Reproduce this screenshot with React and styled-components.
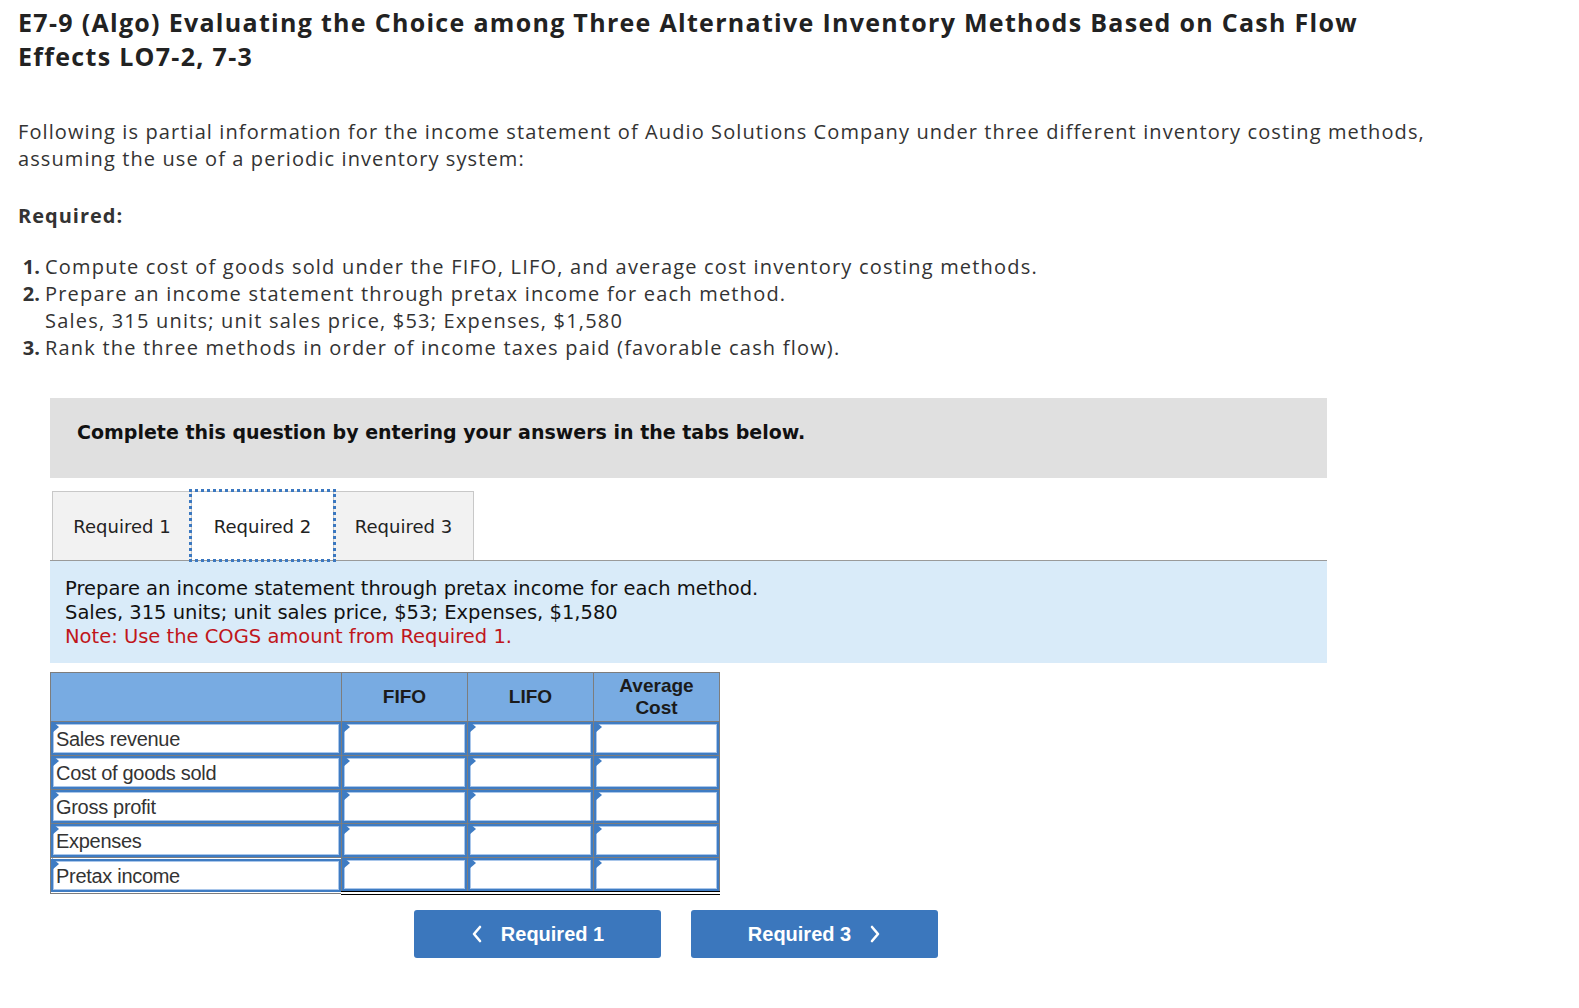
import styled, { createGlobalStyle } from 'styled-components'

const GlobalStyle = createGlobalStyle`
  body {
    margin: 0;
    background: #ffffff;
    font-family: "Open Sans", "Liberation Sans", sans-serif;
    color: #333333;
  }
`

const Page = styled.div`
  padding: 5px 18px 40px 18px;
`

const Title = styled.h1`
  margin: 0;
  font-size: 25px;
  line-height: 34px;
  font-weight: 700;
  letter-spacing: 1.3px;
  color: #222222;
`

const Intro = styled.p`
  margin: 45px 0 0 0;
  font-size: 20px;
  line-height: 27px;
  letter-spacing: 1.1px;
`

const RequiredLabel = styled.h2`
  margin: 30px 0 0 0;
  font-size: 20px;
  line-height: 27px;
  font-weight: 700;
  letter-spacing: 1px;
`

const List = styled.ol`
  margin: 24px 0 0 0;
  padding: 0;
  list-style: none;
`

const Item = styled.li`
  display: flex;
  font-size: 20px;
  line-height: 27px;
  letter-spacing: 1.2px;
`

const Num = styled.span`
  font-weight: 700;
  width: 27px;
  flex: none;
  text-align: right;
  padding-right: 5px;
  box-sizing: border-box;
  letter-spacing: 0;
`

const Question = styled.div`
  margin: 37px 0 0 32px;
  width: 1277px;
`

const Banner = styled.div`
  height: 80px;
  box-sizing: border-box;
  padding: 22px 27px;
  background: #e0e0e0;
  font-family: "DejaVu Sans", Verdana, sans-serif;
  font-weight: 700;
  font-size: 19px;
  line-height: 24px;
  color: #111111;
`

const TabBar = styled.div`
  display: flex;
  margin-top: 13px;
  padding-left: 3px;
  border-bottom: 1px solid #9a9a9a;
`

const Tab = styled.div`
  width: ${({ $w }) => $w}px;
  height: 69px;
  box-sizing: border-box;
  display: flex;
  align-items: center;
  justify-content: center;
  font-family: "DejaVu Sans", Verdana, sans-serif;
  font-size: 18px;
  color: #222222;
  background: ${({ $active }) => ($active ? '#ffffff' : '#f2f2f2')};
  border: 1px solid #c8c8c8;
  border-bottom: none;
  margin-left: -1px;
  position: relative;
  outline: ${({ $active }) => ($active ? '3px dotted #3b78c0' : 'none')};
  outline-offset: -1px;
  z-index: ${({ $active }) => ($active ? 1 : 0)};
`

const Info = styled.div`
  background: #d9ebf9;
  padding: 16px 15px 14px 15px;
  font-family: "DejaVu Sans", Verdana, sans-serif;
  font-size: 19.5px;
  line-height: 24px;
  color: #111111;
`

const Note = styled.div`
  color: #c0161b;
`

const Table = styled.table`
  margin-top: 9px;
  border-collapse: collapse;
  font-family: "Liberation Sans", Arial, sans-serif;
`

const Th = styled.th`
  background: #78abe2;
  border: 1px solid #7d7d7d;
  width: ${({ $w }) => $w}px;
  height: 48px;
  padding: 0;
  font-size: 19px;
  line-height: 22px;
  font-weight: 700;
  color: #1b1b1b;
  text-align: center;
`

const Td = styled.td`
  border: 1px solid #7d7d7d;
  padding: 0;
  height: 33px;
  border-bottom: ${({ $last }) => ($last ? '4px double #000000' : '1px solid #7d7d7d')};
`

const Cell = styled.div`
  position: relative;
  height: 33px;
  box-sizing: border-box;
  border: 2px solid #3f7cc3;
  box-shadow: inset 0 0 0 1px #a9c6ea;
  background: #ffffff;
  font-size: 20px;
  line-height: 31px;
  padding-left: 3px;
  color: #333333;
  letter-spacing: -0.3px;

  &::before {
    content: '';
    position: absolute;
    top: 0;
    left: 0;
    border-top: 6px solid transparent;
    border-bottom: 6px solid transparent;
    border-left: 7px solid #3f7cc3;
    transform: translate(-1px, -3px);
  }
`

const Nav = styled.div`
  display: flex;
  gap: 30px;
  margin: 15px 0 0 364px;
`

const NavButton = styled.button`
  width: 247px;
  height: 48px;
  border: none;
  border-radius: 3px;
  background: #3b77bd;
  color: #ffffff;
  font-family: "Liberation Sans", Arial, sans-serif;
  font-weight: 700;
  font-size: 20px;
  display: flex;
  align-items: center;
  justify-content: center;
  gap: 18px;
`

const Chevron = ({ dir }) => (
  <svg width="12" height="18" viewBox="0 0 12 18">
    <path
      d={dir === 'left' ? 'M9 2 L3 9 L9 16' : 'M3 2 L9 9 L3 16'}
      fill="none"
      stroke="#ffffff"
      strokeWidth="2.6"
      strokeLinecap="round"
      strokeLinejoin="round"
    />
  </svg>
)

const rows = ['Sales revenue', 'Cost of goods sold', 'Gross profit', 'Expenses', 'Pretax income']

const App = () => (
  <Page>
    <GlobalStyle />
    <Title>
      E7-9 (Algo) Evaluating the Choice among Three Alternative Inventory Methods Based on Cash Flow<br />
      Effects LO7-2, 7-3
    </Title>
    <Intro>
      Following is partial information for the income statement of Audio Solutions Company under three different inventory costing methods,<br />
      assuming the use of a periodic inventory system:
    </Intro>
    <RequiredLabel>Required:</RequiredLabel>
    <List>
      <Item><Num>1.</Num><span>Compute cost of goods sold under the FIFO, LIFO, and average cost inventory costing methods.</span></Item>
      <Item>
        <Num>2.</Num>
        <span>
          Prepare an income statement through pretax income for each method.<br />
          Sales, 315 units; unit sales price, $53; Expenses, $1,580
        </span>
      </Item>
      <Item><Num>3.</Num><span>Rank the three methods in order of income taxes paid (favorable cash flow).</span></Item>
    </List>

    <Question>
      <Banner>Complete this question by entering your answers in the tabs below.</Banner>
      <TabBar>
        <Tab $w={140}>Required 1</Tab>
        <Tab $w={143} $active>Required 2</Tab>
        <Tab $w={141}>Required 3</Tab>
      </TabBar>
      <Info>
        Prepare an income statement through pretax income for each method.<br />
        Sales, 315 units; unit sales price, $53; Expenses, $1,580
        <Note>Note: Use the COGS amount from Required 1.</Note>
      </Info>
      <Table>
        <thead>
          <tr>
            <Th $w={290} />
            <Th $w={125}>FIFO</Th>
            <Th $w={125}>LIFO</Th>
            <Th $w={125}>Average<br />Cost</Th>
          </tr>
        </thead>
        <tbody>
          {rows.map((label, i) => (
            <tr key={label}>
              <Td><Cell>{label}</Cell></Td>
              {[0, 1, 2].map((c) => (
                <Td key={c} $last={i === rows.length - 1}><Cell /></Td>
              ))}
            </tr>
          ))}
        </tbody>
      </Table>
      <Nav>
        <NavButton><Chevron dir="left" />Required 1</NavButton>
        <NavButton>Required 3<Chevron dir="right" /></NavButton>
      </Nav>
    </Question>
  </Page>
)

export default App
